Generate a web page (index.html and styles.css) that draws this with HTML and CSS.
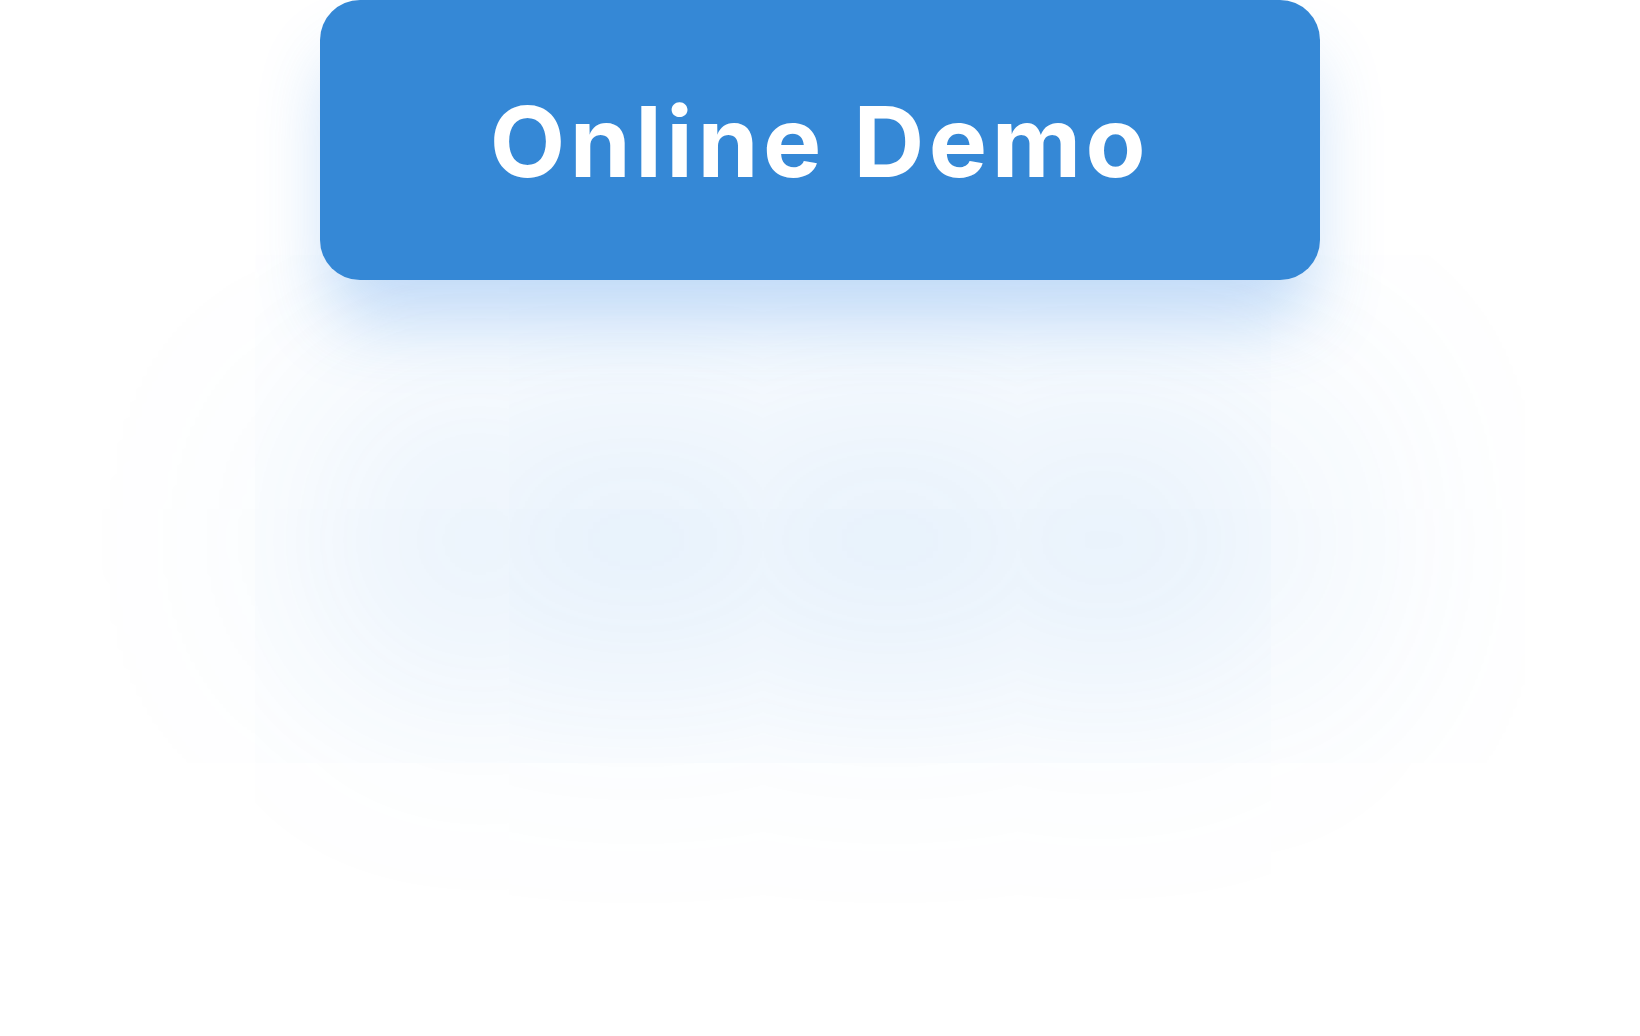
FILE: index.html
```html
<!DOCTYPE html>
<html lang="en">
<head>
<meta charset="utf-8">
<title>Online Demo</title>
<link rel="stylesheet" href="styles.css">
</head>
<body>
<div class="stage">
  <a class="demo-btn" href="#">Online Demo</a>
</div>
</body>
</html>
```
FILE: styles.css
```css
html, body {
  margin: 0;
  padding: 0;
  background: #ffffff;
}
.stage {
  width: 1640px;
  height: 1036px;
  display: flex;
  justify-content: center;
  align-items: flex-start;
  overflow: hidden;
}
.demo-btn {
  width: 1000px;
  height: 280px;
  box-sizing: border-box;
  border-radius: 40px;
  background: #3588d6;
  color: #ffffff;
  text-decoration: none;
  display: flex;
  align-items: center;
  justify-content: center;
  font-family: "Inter", "Open Sans", sans-serif;
  font-weight: 700;
  font-size: 98px;
  letter-spacing: 4.5px;
  padding-top: 3px;
  box-shadow: 0 50px 70px -10px rgba(55, 139, 231, 0.3),
              0 400px 400px rgba(55, 139, 231, 0.15);
}
```
